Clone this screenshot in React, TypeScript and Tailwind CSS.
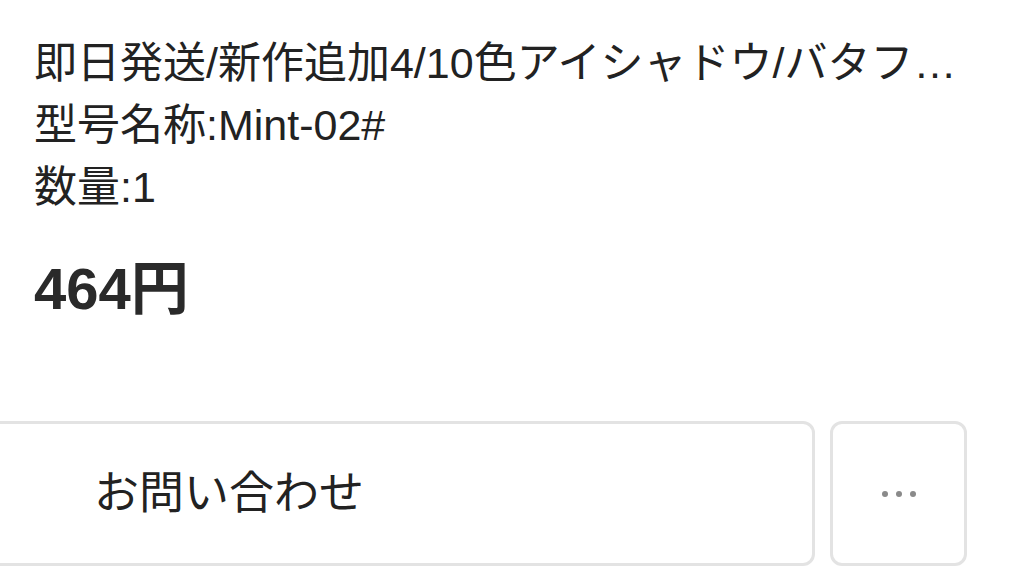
export default function App() {
  return (
    <div
      className="w-[1024px] h-[587px] overflow-hidden bg-white text-[#222]"
      style={{ fontFamily: '"Liberation Sans", "Noto Sans CJK JP", sans-serif' }}
    >
      <div className="pl-[34px] pr-[50px] pt-[32px]">
        <div className="text-[43px] leading-[62px] whitespace-nowrap overflow-hidden text-ellipsis">
          即日発送/新作追加4/10色アイシャドウ/バタフライパレット
        </div>
        <div className="text-[43px] leading-[62px] whitespace-nowrap">型号名称:Mint-02#</div>
        <div className="text-[43px] leading-[62px] whitespace-nowrap">数量:1</div>
        <div className="mt-[37px] text-[58px] leading-[68px] font-bold text-[#2a2a2a]">464円</div>
      </div>
      <div className="mt-[98px] flex gap-[15px] pr-[57px]">
        <button className="ml-[-20px] flex-1 h-[145px] flex items-center pl-[111px] border-[3px] border-[#e3e3e3] rounded-[12px] bg-white text-[45px] text-[#222]">
          お問い合わせ
        </button>
        <button className="w-[137px] h-[145px] flex items-center justify-center gap-[8px] border-[3px] border-[#e3e3e3] rounded-[12px] bg-white">
          <span className="block w-[6px] h-[6px] rounded-full bg-[#8a8a8a]" />
          <span className="block w-[6px] h-[6px] rounded-full bg-[#8a8a8a]" />
          <span className="block w-[6px] h-[6px] rounded-full bg-[#8a8a8a]" />
        </button>
      </div>
    </div>
  );
}
